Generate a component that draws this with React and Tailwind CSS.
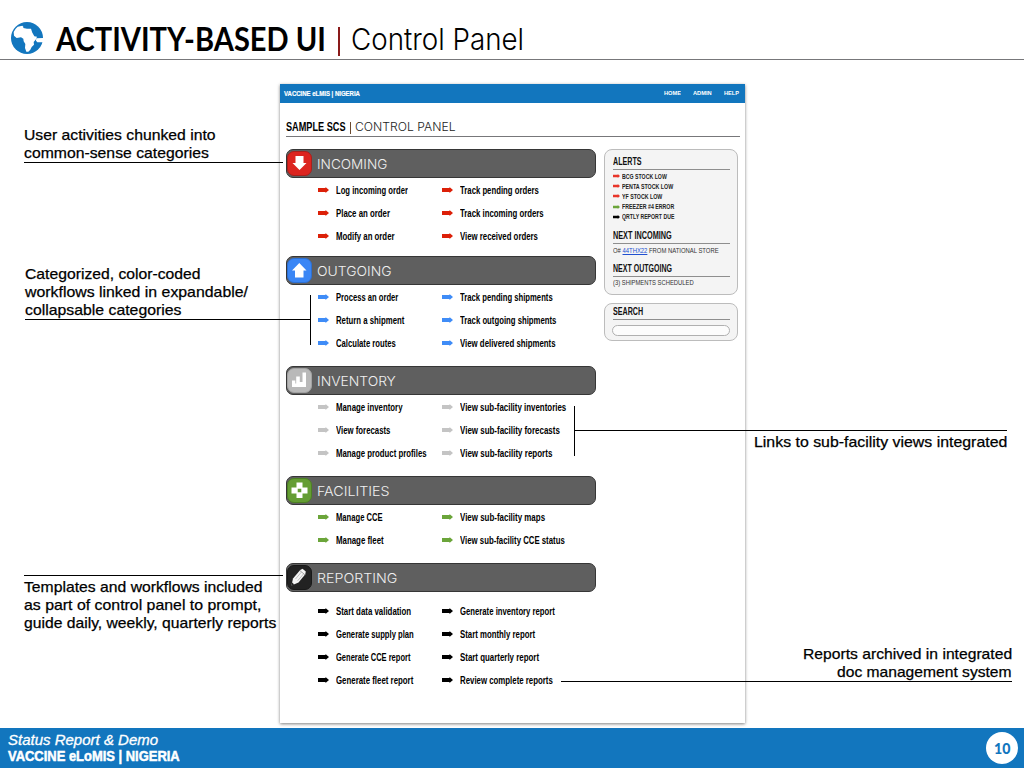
import React, { useLayoutEffect, useRef, useState } from "react";

/* One line of text, condensed or widened to span exactly `w` pixels. */
function Fit({ w, className = "", children }) {
  const ref = useRef(null);
  const [scale, setScale] = useState(1);
  useLayoutEffect(() => {
    const natural = ref.current.offsetWidth;
    if (natural) setScale(w / natural);
  }, [w, children]);
  return (
    <span className={`block shrink-0 whitespace-nowrap ${className}`} style={{ width: w }}>
      <span ref={ref} className="inline-block origin-left" style={{ transform: `scaleX(${scale})` }}>
        {children}
      </span>
    </span>
  );
}

const NARROW = "font-['Liberation_Sans_Narrow','Liberation_Sans',sans-serif] font-bold";
const LIGHT = "font-['Inter','Liberation_Sans',sans-serif] font-light";

function Globe() {
  return (
    <svg viewBox="0 0 96 96" className="h-8 w-8 shrink-0">
      <circle cx="48" cy="48" r="48" fill="#1276be" />
      <path
        d="M8 30 L14 20 L20 14 L34 11 L37 14 L37 18 L48 20 L60 20 L64 32 L70 43 L78 44 L75 52 L68 60 L69 68 L62 75 L58 83 L52 89 L46 89 L42 78 L43 66 L38 58 L37 50 L30 46 L17 48 L9 41 Z"
        fill="#fff"
      />
      <path d="M76 49 L97 48 V61 H79 L75 56 Z" fill="#fff" />
    </svg>
  );
}

function Arrow({ color, small }) {
  return (
    <svg viewBox="0 0 22 12" className={small ? "h-1 w-[7px] shrink-0" : "h-1.5 w-[11px] shrink-0"} preserveAspectRatio="none">
      <path d="M0 2 H15 V0 L22 6 L15 12 V10 H0 Z" fill={color} />
    </svg>
  );
}

const GLYPHS = {
  down: <path d="M8.500 5 H16.500 V12 H19.500 L12.500 19 L5.500 12 H8.500 Z" fill="#fff" />,
  up: <path d="M8 19.500 H16.500 V12.500 H19.500 L12.300 5 L5 12.500 H8 Z" fill="#fff" />,
  bars: <path d="M5 19 V12.500 H8.300 V15.500 H9.200 V8.500 H12.800 V14 H15.500 V4.500 H19 V19 Z" fill="#fff" />,
  plus: <path fillRule="evenodd" d="M9.500 4.500 H15.500 V9.500 H20.500 V15.500 H15.500 V20 H9.500 V15.500 H4.500 V9.500 H9.500 Z M10.700 10.700 V14.300 H14.300 V10.700 Z" fill="#fff" />,
  pencil: (
    <g>
      <path d="M4.500 20.500 L6 13.500 L13.200 5 L15.500 3.800 L18.800 6.500 L18.300 9.300 L11.500 17.500 Z" fill="#f4f4f4" />
      <path d="M8.500 14 L14.300 7.200 M10.600 15.800 L16.600 8.800" stroke="#888" strokeWidth=".5" />
      <path d="M12.800 5.500 L18.200 10" stroke="#555" strokeWidth=".5" />
      <path d="M4.500 20.500 L5.200 17.500 L7.300 19.400 Z" fill="#222" />
    </g>
  ),
};

const SECTIONS = [
  {
    title: "INCOMING", tw: 70.5, glyph: "down", icon: "bg-[#dc241f] border-[#a8201c]", arrow: "#dc2008", box: "h-[107px]", list: "pt-[1px]",
    left: [["Log incoming order", 72], ["Place an order", 54], ["Modify an order", 58.5]],
    right: [["Track pending orders", 79], ["Track incoming orders", 83.5], ["View received orders", 78]],
  },
  {
    title: "OUTGOING", tw: 74, glyph: "up", icon: "bg-[#3a86f5] border-[#2d6fd0]", arrow: "#3f8cf7", box: "h-[110px]", list: "pt-[1px]",
    left: [["Process an order", 62.5], ["Return a shipment", 68.5], ["Calculate routes", 60]],
    right: [["Track pending shipments", 93], ["Track outgoing shipments", 96], ["View delivered shipments", 95.5]],
  },
  {
    title: "INVENTORY", tw: 79, glyph: "bars", icon: "bg-[#b9b9b9] border-[#a2a2a2]", arrow: "#c4c4c4", box: "h-[110px]", list: "pt-[1px]",
    left: [["Manage inventory", 66.5], ["View forecasts", 54.5], ["Manage product profiles", 90.5]],
    right: [["View sub-facility inventories", 106], ["View sub-facility forecasts", 99.5], ["View sub-facility reports", 92]],
  },
  {
    title: "FACILITIES", tw: 73, glyph: "plus", icon: "bg-[#649d33] border-[#4d8023]", arrow: "#6ba53a", box: "h-[87px]", list: "pt-[1px]",
    left: [["Manage CCE", 46.5], ["Manage fleet", 48]],
    right: [["View sub-facility maps", 85], ["View sub-facility CCE status", 104.5]],
  },
  {
    title: "REPORTING", tw: 80, glyph: "pencil", icon: "bg-[#222] border-[#181818]", arrow: "#000", box: "h-[150px]", list: "pt-[8px]",
    left: [["Start data validation", 75.5], ["Generate supply plan", 78], ["Generate CCE report", 74.5], ["Generate fleet report", 77]],
    right: [["Generate inventory report", 95], ["Start monthly report", 75], ["Start quarterly report", 79], ["Review complete reports", 92.5]],
  },
];

function LinkColumn({ items, color, className }) {
  return (
    <ul className={className}>
      {items.map(([label, w]) => (
        <li key={label} className="flex h-[22.8px] items-center gap-[7px]">
          <Arrow color={color} />
          <Fit w={w} className={`${NARROW} pt-[1.5px] text-[10px] leading-3 text-black`}>{label}</Fit>
        </li>
      ))}
    </ul>
  );
}

function Section({ s }) {
  return (
    <section className={s.box}>
      <h3 className="flex h-[29px] items-center rounded-[7px] border border-[#363636] bg-[#5f5f5f]">
        <span className={`flex h-[25px] w-[25px] items-center justify-center rounded-[7px] border ${s.icon}`}>
          <svg viewBox="0 0 25 25" className="h-[25px] w-[25px] shrink-0">{GLYPHS[s.glyph]}</svg>
        </span>
        <Fit w={s.tw} className={`${LIGHT} ml-[5px] text-[13.5px] leading-4 text-[#f0f0f0]`}>{s.title}</Fit>
      </h3>
      <div className={`flex pl-8 ${s.list}`}>
        <LinkColumn items={s.left} color={s.arrow} className="w-[124px] shrink-0" />
        <LinkColumn items={s.right} color={s.arrow} />
      </div>
    </section>
  );
}

const ALERTS = [
  ["BCG STOCK LOW", 44.5, "#e8352a"],
  ["PENTA STOCK LOW", 51, "#e8352a"],
  ["YF STOCK LOW", 40, "#e8352a"],
  ["FREEZER #4 ERROR", 52.5, "#6ba53a"],
  ["QRTLY REPORT DUE", 52.5, "#000"],
];

function SideTitle({ w, children }) {
  return (
    <h4 className="h-[13px] border-b border-[#8e8e8e]">
      <Fit w={w} className={`${NARROW} text-[10px] leading-[10px] text-[#111]`}>{children}</Fit>
    </h4>
  );
}

function Sidebar() {
  const small = "font-['Liberation_Sans',sans-serif] text-[6.5px] leading-[8px] text-[#333]";
  return (
    <aside className="flex w-[134px] flex-col gap-2">
      <div className="h-[146px] rounded-[8px] border border-[#bcbcbc] bg-[#f4f4f4] pl-2 pr-[7px] pt-[7px]">
        <SideTitle w={28.5}>ALERTS</SideTitle>
        <ul className="pt-[1px]">
          {ALERTS.map(([label, w, color]) => (
            <li key={label} className="flex h-[10.2px] items-center gap-[2.2px]">
              <Arrow color={color} small />
              <Fit w={w} className={`${NARROW} text-[7.5px] leading-[9px] text-[#222]`}>{label}</Fit>
            </li>
          ))}
        </ul>
        <div className="pt-[9px]">
          <SideTitle w={59}>NEXT INCOMING</SideTitle>
          <Fit w={106} className={`${small} pt-[3px]`}>
            O# <a className="text-[#2050d0] underline">44THX22</a> FROM NATIONAL STORE
          </Fit>
        </div>
        <div className="pt-[9px]">
          <SideTitle w={59}>NEXT OUTGOING</SideTitle>
          <Fit w={81} className={`${small} pt-[2px]`}>(3) SHIPMENTS SCHEDULED</Fit>
        </div>
      </div>
      <div className="h-[38px] rounded-[8px] border border-[#bcbcbc] bg-[#f4f4f4] pl-2 pr-[7px] pt-[3px]">
        <SideTitle w={30}>SEARCH</SideTitle>
        <div className="-ml-px mt-[5px] h-[11px] w-[118px] rounded-full border border-[#b0b0b0] bg-[#fcfcfc]" />
      </div>
    </aside>
  );
}

function ControlPanel() {
  const nav = "font-['Liberation_Sans',sans-serif] font-bold text-[6px] leading-[19px]";
  return (
    <div className="h-[639px] w-[465px] shrink-0 bg-white shadow-[0_1px_3px_rgba(0,0,0,0.5)]">
      <div className="flex h-[19px] items-center justify-between bg-[#1276be] pl-1 pr-[6px] text-white">
        <Fit w={76} className={`${NARROW} text-[7.5px] leading-[19px] [-webkit-text-stroke:0.2px_#fff]`}>VACCINE eLMIS | NIGERIA</Fit>
        <nav className="flex gap-3">
          <Fit w={17} className={nav}>HOME</Fit>
          <Fit w={19} className={nav}>ADMIN</Fit>
          <Fit w={15} className={nav}>HELP</Fit>
        </nav>
      </div>
      <div className="pl-1.5 pr-[5px]">
        <div className="flex h-[34px] items-end border-b-[1.5px] border-[#77777a] pb-[1px]">
          <Fit w={59.5} className={`${NARROW} text-[12px] leading-4 text-black`}>SAMPLE SCS</Fit>
          <span className="mx-[4px] mb-[1.5px] h-3 w-px bg-[#6b4a2f]" />
          <Fit w={100.5} className={`${LIGHT} text-[11.5px] leading-4 text-[#222]`}>CONTROL PANEL</Fit>
        </div>
        <div className="flex gap-2 pt-3">
          <div className="w-[310px] shrink-0">
            {SECTIONS.map((s) => <Section key={s.title} s={s} />)}
          </div>
          <Sidebar />
        </div>
      </div>
    </div>
  );
}

function Note({ lines, className = "" }) {
  return (
    <div className={`flex flex-col ${className}`}>
      {lines.map(([text, w]) => (
        <Fit key={text} w={w} className="font-['Liberation_Sans',sans-serif] text-[15px] leading-[18px] text-black [-webkit-text-stroke:0.25px_#000]">
          {text}
        </Fit>
      ))}
    </div>
  );
}

/* Connector lines that run from the notes across the panel. */
function Connectors() {
  return (
    <svg viewBox="0 0 1024 768" className="pointer-events-none absolute inset-0 h-[768px] w-[1024px]" shapeRendering="crispEdges">
      <path
        d="M24 162.500 H283 M25 319.500 H310 M310.500 295 V345 M24 575.500 H283 M574.500 406 V456 M575 430.500 H1007 M561 681.500 H1012"
        stroke="#000"
        strokeWidth="1"
        fill="none"
      />
    </svg>
  );
}

export default function App() {
  return (
    <div className="relative flex h-[768px] w-[1024px] flex-col overflow-hidden bg-white">
      <header className="flex h-[60px] shrink-0 items-start border-b-[1.5px] border-[#77777a] pl-[11px] pt-[22px]">
        <Globe />
        <Fit w={270} className="ml-[12.5px] -mt-px font-['Lato',sans-serif] text-[32.5px] font-bold leading-9 text-black">ACTIVITY-BASED UI</Fit>
        <span className="ml-[12.5px] mt-[5px] h-[29px] w-[1.5px] shrink-0 bg-[#8a1a1a]" />
        <Fit w={173} className={`${LIGHT} -mt-px ml-[11px] text-[30px] leading-9 text-black`}>Control Panel</Fit>
      </header>

      <main className="flex h-[668px] shrink-0 pt-6">
        <div className="flex w-[280px] shrink-0 flex-col pl-6 pt-[42px]">
          <Note lines={[["User activities chunked into", 192], ["common-sense categories", 185]]} />
          <Note className="mt-[103px] pl-px" lines={[["Categorized, color-coded", 176], ["workflows linked in expandable/", 223], ["collapsable categories", 156]]} />
          <Note className="mt-[259px]" lines={[["Templates and workflows included", 239], ["as part of control panel to prompt,", 237], ["guide daily, weekly, quarterly reports", 252]]} />
        </div>
        <ControlPanel />
        <div className="flex grow flex-col items-end pr-3 pt-[349px]">
          <Note className="mr-[5px]" lines={[["Links to sub-facility views integrated", 253]]} />
          <Note className="mt-[194px] items-end" lines={[["Reports archived in integrated", 209], ["doc management system", 175]]} />
        </div>
      </main>

      <footer className="flex h-10 shrink-0 items-center justify-between bg-[#1276be] pl-2 pr-1.5 text-white">
        <div className="-mt-px">
          <Fit w={150} className="font-['Liberation_Sans',sans-serif] text-[14px] italic leading-4 [-webkit-text-stroke:0.3px_#fff]">Status Report &amp; Demo</Fit>
          <Fit w={172} className={`${NARROW} text-[14px] leading-[16px] [-webkit-text-stroke:0.5px_#fff]`}>VACCINE eLoMIS | NIGERIA</Fit>
        </div>
        <div className="flex h-8 w-8 items-center justify-center rounded-full bg-white">
          <Fit w={16} className="font-['Lato',sans-serif] text-[15px] font-black leading-4 text-[#1276be]">10</Fit>
        </div>
      </footer>
      <Connectors />
    </div>
  );
}
